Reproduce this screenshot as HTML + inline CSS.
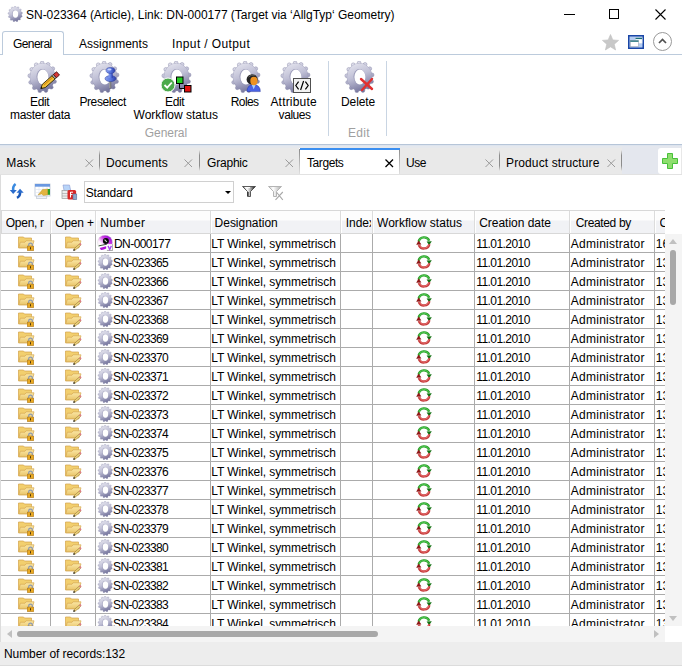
<!DOCTYPE html><html><head><meta charset="utf-8"><style>
*{margin:0;padding:0;box-sizing:border-box}
html,body{width:682px;height:666px;overflow:hidden;background:#fff}
body{position:relative;font-family:"Liberation Sans",sans-serif;font-size:12px;color:#000}
.a{position:absolute}
.t{position:absolute;white-space:nowrap;line-height:14px}
svg{position:absolute;overflow:visible}
.vl{position:absolute;width:1px}
.hl{position:absolute;height:1px}
</style></head><body>
<svg width="0" height="0" style="position:absolute"><defs>
<symbol id="flock" viewBox="0 0 17 15">
<path d="M0.5,1 H5.5 L6.5,2 H13.5 V11.8 H0.5Z" fill="#f2cf6e" stroke="#d2a24a" stroke-width="0.7"/>
<path d="M0.8,11.8 L2.3,6.2 H7 L8,4.8 H16 L14,11.8Z" fill="url(#fold)" stroke="#d6a850" stroke-width="0.7"/>
<path d="M10.7,10.2 V8.8 Q10.7,7.2 12.5,7.2 Q14.3,7.2 14.3,8.8 V10.2" fill="none" stroke="#8a9ab4" stroke-width="1.2"/>
<rect x="9.3" y="10.1" width="6.4" height="4.5" fill="#eaaa22" stroke="#b07818" stroke-width="0.6"/>
<rect x="12.1" y="11.2" width="0.9" height="2.2" fill="#3a2a10"/>
</symbol>
<symbol id="fpen" viewBox="0 0 17 15">
<path d="M0.5,1 H5.5 L6.5,2 H13.5 V11.8 H0.5Z" fill="#f2cf6e" stroke="#d2a24a" stroke-width="0.7"/>
<path d="M0.8,11.8 L2.3,6.2 H7 L8,4.8 H16 L14,11.8Z" fill="url(#fold)" stroke="#d6a850" stroke-width="0.7"/>
<path d="M9.5,13.6 L15,8.6" stroke="#a88a40" stroke-width="2.2" stroke-linecap="round"/>
<path d="M9.8,13.3 L14.8,8.8" stroke="#f8e088" stroke-width="1.1"/>
<path d="M14.6,9 L15.9,7.6" stroke="#e07a8a" stroke-width="1.8"/>
<path d="M8.5,14.6 L9.6,13.5" stroke="#333" stroke-width="1.3"/>
</symbol>
<symbol id="dn" viewBox="0 0 16 16">
<linearGradient id="dng" x1="0.85" y1="0.05" x2="0.15" y2="0.8"><stop offset="0" stop-color="#8a00d0"/><stop offset="0.4" stop-color="#d040e8"/><stop offset="0.75" stop-color="#fff0ff"/><stop offset="1" stop-color="#ffffff"/></linearGradient>
<circle cx="8" cy="7.6" r="7.4" fill="url(#dng)" stroke="#c8c8c8" stroke-width="0.4"/>
<path d="M1.2,11.5 L10,9.4 L10,15.4 L4,15.4 Q2,13.8 1.2,11.5Z" fill="#fff"/>
<path d="M2.6,13 L9.2,11.2 L9.2,13.6 Q6,15.4 4,15 Z" fill="#b010d8"/>
<circle cx="8.9" cy="6" r="3" fill="#080808"/>
<path d="M7.6,4.6 L9.8,6.9" stroke="#c8e0c8" stroke-width="1.1"/>
<path d="M1.6,10.9 L9.9,9.2" stroke="#3a5a3a" stroke-width="1"/>
<rect x="9.9" y="9.2" width="5.8" height="6.2" fill="#fff"/>
<path d="M15.7,9.2 V15.4 H9.9" stroke="#8a8a8a" stroke-width="0.8" fill="none"/>
<path d="M11,10.9 L12.7,14.4 L14.4,10.9" stroke="#a848f0" stroke-width="1.4" fill="none"/>
</symbol>
<symbol id="wf" viewBox="0 0 16 16">
<path d="M2.6,6.6 A5.6,5.6 0 0 1 13.2,5.8" fill="none" stroke="#2a9e2a" stroke-width="2.4"/>
<path d="M2.9,6.2 A5.2,5.2 0 0 1 12.8,5.6" fill="none" stroke="#58d058" stroke-width="0.9"/>
<path d="M10.6,6.4 L15.8,6.2 L13.2,10.2Z" fill="#127012"/>
<path d="M13.4,9.2 A5.6,5.6 0 0 1 2.8,10" fill="none" stroke="#c43a3a" stroke-width="2.4"/>
<path d="M13,9.6 A5.2,5.2 0 0 1 3.3,10.3" fill="none" stroke="#f07a7a" stroke-width="0.8"/>
<path d="M0.2,9.8 L5.4,9.6 L2.6,5.6Z" fill="#8e1616"/>
</symbol>
</defs></svg>

<svg width="0" height="0" style="position:absolute">
<defs>
<linearGradient id="gg" gradientUnits="userSpaceOnUse" x1="9" y1="2" x2="21" y2="31">
<stop offset="0" stop-color="#e4e4ee"/><stop offset="0.45" stop-color="#c0c0d6"/><stop offset="1" stop-color="#6c6c96"/>
</linearGradient>
<radialGradient id="gh" cx="0.45" cy="0.4" r="0.6">
<stop offset="0" stop-color="#ffffff"/><stop offset="1" stop-color="#f0f0f6"/>
</radialGradient>
<symbol id="gear" viewBox="0 0 32 32">
<g fill="url(#gg)" stroke="#8a8aaa" stroke-width="0.5"><circle cx="29.10" cy="13.91" r="1.9"/><circle cx="28.54" cy="20.58" r="1.9"/><circle cx="25.22" cy="26.20" r="1.9"/><circle cx="19.91" cy="29.49" r="1.9"/><circle cx="13.81" cy="29.69" r="1.9"/><circle cx="8.33" cy="26.75" r="1.9"/><circle cx="4.72" cy="21.34" r="1.9"/><circle cx="3.81" cy="14.72" r="1.9"/><circle cx="5.81" cy="8.39" r="1.9"/><circle cx="10.25" cy="3.80" r="1.9"/><circle cx="16.13" cy="2.01" r="1.9"/><circle cx="22.09" cy="3.42" r="1.9"/><circle cx="26.77" cy="7.71" r="1.9"/><ellipse cx="16.5" cy="16" rx="12.5" ry="13.7"/></g>
<ellipse cx="16.6" cy="16" rx="12.3" ry="13.5" fill="url(#gg)"/>
<ellipse cx="16.4" cy="15.6" rx="5.9" ry="7.7" fill="#9a9ab8"/>
<ellipse cx="16.9" cy="16.0" rx="5.5" ry="7.4" fill="#fff"/>
</symbol>
<linearGradient id="fold" x1="0" y1="0" x2="0" y2="1">
<stop offset="0" stop-color="#fbe7a6"/><stop offset="1" stop-color="#e9c56a"/>
</linearGradient>
</defs>
</svg>

<svg style="left:7px;top:5.5px" width="16" height="16"><use href="#gear" width="16" height="16"/></svg>
<div class="t" id="t_title" style="left:26.00px;top:7.84px;letter-spacing:-0.015px;">SN-023364 (Article), Link: DN-000177 (Target via ‘AllgTyp‘ Geometry)</div>
<div class="hl" style="left:564px;top:14px;width:11px;background:#000"></div>
<div class="a" style="left:609px;top:9px;width:10px;height:10px;border:1px solid #000"></div>
<svg style="left:655px;top:9px" width="11" height="11"><path d="M0.5,0.5 L10.5,10.5 M10.5,0.5 L0.5,10.5" stroke="#000" stroke-width="1.1"/></svg>
<div class="hl" style="left:0;top:54px;width:682px;background:#bccbdc"></div>
<div class="a" style="left:2px;top:31px;width:62px;height:24px;border:1px solid #bccbdc;border-bottom:none;border-radius:3px 3px 0 0;background:#fff"></div>
<div class="t" id="t_gen" style="left:13.00px;top:36.54px;letter-spacing:-0.583px;">General</div>
<div class="t" id="t_asg" style="left:79.00px;top:36.54px;letter-spacing:0.020px;">Assignments</div>
<div class="t" id="t_io" style="left:172.00px;top:36.54px;letter-spacing:0.385px;">Input / Output</div>
<svg style="left:601.5px;top:33.5px" width="17" height="17" viewBox="0 0 16 16"><path d="M8,0.5 L10.2,5.6 L15.6,6.0 L11.5,9.6 L12.8,15 L8,12.1 L3.2,15 L4.5,9.6 L0.4,6.0 L5.8,5.6Z" fill="#c8c8c8" stroke="#c0c0c0" stroke-width="0.6" stroke-linejoin="round"/></svg>
<svg style="left:628px;top:35px" width="16" height="14" viewBox="0 0 16 14"><rect x="0.75" y="0.75" width="14.5" height="12.5" fill="#b4ccf2" stroke="#1a46a6" stroke-width="1.5"/><rect x="7.5" y="2.8" width="6.6" height="5.6" fill="#fff" stroke="#c8d4e4" stroke-width="0.5"/><rect x="7.5" y="2.8" width="6.6" height="1.3" fill="#1a6e78"/><rect x="2.3" y="5.5" width="8.2" height="6.2" fill="#fff" stroke="#9aa4b4" stroke-width="0.6"/><rect x="2.3" y="5.5" width="8.2" height="1.3" fill="#1a6e78"/></svg>
<svg style="left:653px;top:32px" width="19" height="19" viewBox="0 0 19 19"><circle cx="9.5" cy="9.5" r="9" fill="#fff" stroke="#9a9a9a" stroke-width="1"/><path d="M6,11 L9.5,7.5 L13,11" fill="none" stroke="#505050" stroke-width="1.7"/></svg>
<svg style="left:26px;top:61px" width="32" height="32"><use href="#gear" width="32" height="32"/></svg>
<svg style="left:26px;top:61px" width="34" height="32" viewBox="0 0 34 32"><g transform="translate(14.8,27.6) rotate(-41.4)"><path d="M0,0 L4,-2.2 L17,-2.2 L17,2.2 L4,2.2Z" fill="#f2c23a" stroke="#2a2000" stroke-width="0.8" stroke-linejoin="round"/><path d="M4.5,-0.6 H16.5" stroke="#d89010" stroke-width="1.2"/><path d="M0,0 L1.6,-0.9 L1.6,0.9Z" fill="#000"/><rect x="17" y="-2.2" width="1.8" height="4.4" fill="#b8b8b8" stroke="#2a2000" stroke-width="0.6"/><rect x="18.8" y="-2.2" width="4.2" height="4.4" fill="#d83838" stroke="#2a0000" stroke-width="0.7"/></g></svg>
<div class="t" id="t_e1" style="left:30.00px;top:94.54px;letter-spacing:-0.333px;">Edit</div>
<div class="t" id="t_md" style="left:10.00px;top:107.84px;letter-spacing:-0.300px;">master data</div>
<svg style="left:88px;top:61px" width="32" height="32"><use href="#gear" width="32" height="32"/></svg>
<svg style="left:88px;top:61px" width="32" height="32" viewBox="0 0 32 32"><defs><linearGradient id="pinb" x1="0" x2="1" y1="0" y2="0"><stop offset="0" stop-color="#8aa0f0"/><stop offset="0.5" stop-color="#5a78e0"/><stop offset="1" stop-color="#2a3ca8"/></linearGradient></defs><path d="M22.3,20 L22.3,27.5" stroke="#707070" stroke-width="2"/><path d="M21.8,20 L21.8,27" stroke="#c8c8c8" stroke-width="0.6"/><ellipse cx="22.5" cy="17.6" rx="5.5" ry="3" fill="url(#pinb)" stroke="#2a3890" stroke-width="0.5"/><rect x="20.6" y="11" width="4.1" height="6" fill="url(#pinb)"/><ellipse cx="22.5" cy="9.4" rx="4.5" ry="2.9" fill="url(#pinb)" stroke="#2a3890" stroke-width="0.5"/><ellipse cx="21.5" cy="8.6" rx="2" ry="1" fill="#c8d4ff"/></svg>
<div class="t" id="t_pre" style="left:79.40px;top:94.54px;letter-spacing:-0.388px;">Preselect</div>
<svg style="left:160px;top:61px" width="32" height="32"><use href="#gear" width="32" height="32"/></svg>
<svg style="left:160px;top:61px" width="34" height="34" viewBox="0 0 34 34"><circle cx="8" cy="24" r="7" fill="#4caa4c" stroke="#fff" stroke-width="1"/><path d="M4.5,24 L7.2,26.7 L11.8,21.5" fill="none" stroke="#fff" stroke-width="1.8"/><rect x="16.5" y="16" width="6.5" height="6.5" fill="#22cc22" stroke="#000" stroke-width="1"/><rect x="24.5" y="24.5" width="6.5" height="6.5" fill="#e01010" stroke="#000" stroke-width="1"/><path d="M19.5,22.5 L19.5,27.5 L24,27.5" fill="none" stroke="#000" stroke-width="1"/></svg>
<div class="t" id="t_e2" style="left:165.00px;top:94.54px;letter-spacing:-0.333px;">Edit</div>
<div class="t" id="t_wfs" style="left:133.60px;top:107.84px;letter-spacing:-0.007px;">Workflow status</div>
<div class="t" id="t_g2" style="left:144.70px;top:125.64px;color:#a0a0a0;letter-spacing:-0.033px;">General</div>
<svg style="left:229px;top:61px" width="32" height="32"><use href="#gear" width="32" height="32"/></svg>
<svg style="left:229px;top:61px" width="32" height="32" viewBox="0 0 32 32"><path d="M18,30.6 Q18,23.8 24.6,23.6 Q31.3,23.8 31.3,30.6Z" fill="#4a62e4" stroke="#2a3aa0" stroke-width="0.5"/><path d="M22.8,23.9 L24.7,28.2 L26.6,23.9Z" fill="#a8d0ff"/><ellipse cx="23.1" cy="18.4" rx="5.5" ry="5.2" fill="#222"/><ellipse cx="24.9" cy="20" rx="3.6" ry="4.2" fill="#ee9222"/><path d="M19.5,16 Q22,13.5 26,14" stroke="#777" stroke-width="0.8" fill="none"/></svg>
<div class="t" id="t_rol" style="left:230.80px;top:94.54px;letter-spacing:-0.600px;">Roles</div>
<svg style="left:279px;top:61px" width="32" height="32"><use href="#gear" width="32" height="32"/></svg>
<svg style="left:279px;top:61px" width="34" height="34" viewBox="0 0 34 34"><rect x="14.5" y="17.5" width="17" height="14" fill="#f2f2f2" stroke="#505050" stroke-width="1"/><path d="M19.6,20.6 L16.8,24.5 L19.6,28.4 M24.6,20 L21.6,29 M26.4,20.6 L29.2,24.5 L26.4,28.4" stroke="#000" stroke-width="1.2" fill="none"/></svg>
<div class="t" id="t_att" style="left:270.40px;top:94.54px;letter-spacing:0.200px;">Attribute</div>
<div class="t" id="t_val" style="left:278.60px;top:107.84px;letter-spacing:-0.440px;">values</div>
<div class="vl" style="left:328px;top:61px;height:75px;background:#c9d5e3"></div>
<svg style="left:343px;top:61px" width="32" height="32"><use href="#gear" width="32" height="32"/></svg>
<svg style="left:343px;top:61px" width="32" height="32" viewBox="0 0 32 32"><path d="M18,18 L29,28 M29,18 L19,29" stroke="#e03030" stroke-width="2.4" stroke-linecap="round"/></svg>
<div class="t" id="t_del" style="left:341.00px;top:94.54px;letter-spacing:-0.100px;">Delete</div>
<div class="t" id="t_e3" style="left:348.00px;top:125.64px;color:#a0a0a0;letter-spacing:0.267px;">Edit</div>
<div class="vl" style="left:386px;top:61px;height:75px;background:#c9d5e3"></div>
<div class="hl" style="left:0;top:144px;width:682px;background:#b6c5d8"></div>
<div class="hl" style="left:0;top:145px;width:682px;background:#dde4ee"></div>
<div class="a" style="left:0;top:146px;width:682px;height:29px;background:#e9e9e9;border-bottom:1px solid #e2e2e2"></div>
<div class="hl" style="left:0;top:146px;width:682px;height:2px;background:#e5e8ed"></div>
<div class="a" style="left:622px;top:146px;width:60px;height:28px;background:#e4e7ee"></div>
<div class="a" style="left:299px;top:148px;width:101px;height:26px;background:#fff"></div>
<div class="vl" style="left:299px;top:149px;height:25px;background:linear-gradient(#8a8a8a,#e0e0e0)"></div>
<div class="vl" style="left:399px;top:149px;height:25px;background:linear-gradient(#8a8a8a,#e0e0e0)"></div>
<div class="a" style="left:300px;top:148px;width:100px;height:2px;background:#3a8ef0"></div>
<div class="t" id="tab_Mask" style="left:6.20px;top:155.84px;letter-spacing:0.233px;">Mask</div>
<svg style="left:85px;top:159px" width="9" height="9"><path d="M0.5,0.5 L8,8 M8,0.5 L0.5,8" stroke="#9a9a9a" stroke-width="1"/></svg>
<div class="vl" style="left:99px;top:150px;height:21px;background:linear-gradient(rgba(140,140,140,0),#8c8c8c 25%,#8c8c8c 75%,rgba(140,140,140,0))"></div>
<div class="t" id="tab_Documents" style="left:106.00px;top:155.84px;letter-spacing:0.125px;">Documents</div>
<svg style="left:184px;top:159px" width="9" height="9"><path d="M0.5,0.5 L8,8 M8,0.5 L0.5,8" stroke="#9a9a9a" stroke-width="1"/></svg>
<div class="vl" style="left:199px;top:150px;height:21px;background:linear-gradient(rgba(140,140,140,0),#8c8c8c 25%,#8c8c8c 75%,rgba(140,140,140,0))"></div>
<div class="t" id="tab_Graphic" style="left:207.00px;top:155.84px;letter-spacing:-0.200px;">Graphic</div>
<svg style="left:285px;top:159px" width="9" height="9"><path d="M0.5,0.5 L8,8 M8,0.5 L0.5,8" stroke="#9a9a9a" stroke-width="1"/></svg>
<div class="t" id="tab_Targets" style="left:307.00px;top:155.84px;letter-spacing:-0.417px;">Targets</div>
<svg style="left:385px;top:159px" width="9" height="9"><path d="M0.5,0.5 L8,8 M8,0.5 L0.5,8" stroke="#000" stroke-width="1.3"/></svg>
<div class="t" id="tab_Use" style="left:406.00px;top:155.84px;letter-spacing:-0.500px;">Use</div>
<svg style="left:485px;top:159px" width="9" height="9"><path d="M0.5,0.5 L8,8 M8,0.5 L0.5,8" stroke="#9a9a9a" stroke-width="1"/></svg>
<div class="vl" style="left:499px;top:150px;height:21px;background:linear-gradient(rgba(140,140,140,0),#8c8c8c 25%,#8c8c8c 75%,rgba(140,140,140,0))"></div>
<div class="t" id="tab_Product" style="left:506.00px;top:155.84px;letter-spacing:0.125px;">Product structure</div>
<svg style="left:607px;top:159px" width="9" height="9"><path d="M0.5,0.5 L8,8 M8,0.5 L0.5,8" stroke="#9a9a9a" stroke-width="1"/></svg>
<div class="vl" style="left:621px;top:150px;height:21px;background:linear-gradient(rgba(140,140,140,0),#8c8c8c 25%,#8c8c8c 75%,rgba(140,140,140,0))"></div>
<div class="a" style="left:658px;top:148px;width:24px;height:26px;background:#fff;border-radius:3px 0 0 3px;border-right:1px solid #e8e8e8"></div>
<svg style="left:662px;top:153px" width="16" height="16" viewBox="0 0 16 16"><path d="M5.5,0.5 H10.5 V5.5 H15.5 V10.5 H10.5 V15.5 H5.5 V10.5 H0.5 V5.5 H5.5Z" fill="#8ede6e" stroke="#48c03a" stroke-width="1"/></svg>
<svg style="left:6px;top:180px" width="24" height="24" viewBox="0 0 24 24"><path d="M9.6,4 Q6.6,6 7.2,10.5" stroke="#3a8ae0" stroke-width="2.6" fill="none"/><path d="M3.8,10 L10.8,10 L7.2,14Z" fill="#2a6ccc"/><path d="M11,17.8 Q14.5,16 14,12" stroke="#1a58b8" stroke-width="2.6" fill="none"/><path d="M10.5,12.8 L17.7,12.8 L14,8.8Z" fill="#2a6ccc"/></svg>
<svg style="left:30px;top:180px" width="24" height="24" viewBox="0 0 24 24"><rect x="6.3" y="15.5" width="10.5" height="3" fill="#eef2f8" stroke="#b8c0cc" stroke-width="0.6"/><rect x="5" y="4" width="15" height="12" fill="#fff" stroke="#b8c4d4" stroke-width="0.8"/><path d="M5,9.5 H20 M5,12.5 H20 M9,6.5 V16 M13,6.5 V16 M17,6.5 V16" stroke="#dde4ee" stroke-width="0.6"/><rect x="5" y="4" width="15" height="2.7" fill="#6a98e0"/><path d="M8,15 L12.5,9.5 L18,9 L18,14.8 L13.5,15.5 L11.5,14Z" fill="#e2b440" stroke="#b88a20" stroke-width="0.4"/><rect x="17.8" y="9" width="2.2" height="5.8" fill="#28a028"/></svg>
<svg style="left:57px;top:180px" width="24" height="24" viewBox="0 0 24 24"><path d="M6,5 L12.5,5 L13.7,10.5 L7,10.5Z" fill="#b8d4f8" stroke="#8a98d0" stroke-width="0.6"/><rect x="5" y="10.5" width="8" height="8" fill="#ececec" stroke="#9a9a9a" stroke-width="0.7"/><path d="M5,13.5 H11 M5,16 H11" stroke="#a0a0a0" stroke-width="0.6"/><rect x="10.5" y="10" width="8.6" height="9.6" rx="1.5" fill="#d82828"/><path d="M13.5,12 V17.5 M13.5,12.2 H16 M13.5,14.6 H15.5" stroke="#fff" stroke-width="1"/><rect x="16" y="14" width="3.8" height="5.6" fill="#90a8c8" stroke="#4a6a9a" stroke-width="0.5"/></svg>
<div class="a" style="left:84px;top:181px;width:150px;height:22px;border:1px solid #d0d0d0;background:#fff"></div>
<div class="t" id="t_std" style="left:85.80px;top:185.74px;letter-spacing:-0.243px;">Standard</div>
<svg style="left:225px;top:191px" width="6" height="3" viewBox="0 0 6 3"><path d="M0,0 H6 L3,3Z" fill="#000"/></svg>
<svg style="left:242px;top:186px" width="14" height="11" viewBox="0 0 14 11"><defs><linearGradient id="flt" x1="0" x2="1" y1="0" y2="0"><stop offset="0" stop-color="#808080"/><stop offset="0.35" stop-color="#ffffff"/><stop offset="0.65" stop-color="#a0a0a0"/><stop offset="1" stop-color="#000"/></linearGradient></defs><path d="M0.5,0.5 H13.5 L8.5,5.5 V10.5 H5.5 V5.5Z" fill="url(#flt)" stroke="#3a3a3a" stroke-width="0.8" stroke-linejoin="round"/><path d="M6,6 V10" stroke="#202020" stroke-width="1.2"/><path d="M3,1.6 H8" stroke="#fff" stroke-width="1"/></svg>
<svg style="left:268px;top:186px" width="16" height="15" viewBox="0 0 16 15"><defs><linearGradient id="flt2" x1="0" x2="1" y1="0" y2="0"><stop offset="0" stop-color="#c8c8c8"/><stop offset="0.35" stop-color="#ffffff"/><stop offset="1" stop-color="#a8a8a8"/></linearGradient></defs><path d="M0.5,0.5 H13.5 L8.5,5.5 V10.5 H5.5 V5.5Z" fill="url(#flt2)" stroke="#b4b4b4" stroke-width="1" stroke-linejoin="round"/><path d="M7.5,13.8 L14.8,6 M8.8,6.5 L14.8,13.8" stroke="#a8a8a8" stroke-width="1.1"/></svg>
<div class="vl" style="left:1px;top:210px;height:24px;background:#d8d8d8"></div>
<div class="a" style="left:1px;top:210px;width:664px;height:24px;border-top:1px solid #d8d8d8;border-bottom:1px solid #d8d8d8;background:linear-gradient(#fdfdfd 0,#fdfdfd 9px,#f1f2f5 10px,#f1f2f5 100%)"></div>
<div class="vl" style="left:1px;top:210px;height:24px;background:#d8d8d8"></div>
<div class="vl" style="left:50px;top:211px;height:22px;background:#dcdcdc"></div>
<div class="vl" style="left:51px;top:211px;height:22px;background:#fff"></div>
<div class="vl" style="left:95px;top:211px;height:22px;background:#dcdcdc"></div>
<div class="vl" style="left:96px;top:211px;height:22px;background:#fff"></div>
<div class="vl" style="left:210px;top:211px;height:22px;background:#dcdcdc"></div>
<div class="vl" style="left:211px;top:211px;height:22px;background:#fff"></div>
<div class="vl" style="left:340px;top:211px;height:22px;background:#dcdcdc"></div>
<div class="vl" style="left:341px;top:211px;height:22px;background:#fff"></div>
<div class="vl" style="left:372px;top:211px;height:22px;background:#dcdcdc"></div>
<div class="vl" style="left:373px;top:211px;height:22px;background:#fff"></div>
<div class="vl" style="left:474px;top:211px;height:22px;background:#dcdcdc"></div>
<div class="vl" style="left:475px;top:211px;height:22px;background:#fff"></div>
<div class="vl" style="left:569px;top:211px;height:22px;background:#dcdcdc"></div>
<div class="vl" style="left:570px;top:211px;height:22px;background:#fff"></div>
<div class="vl" style="left:654px;top:211px;height:22px;background:#dcdcdc"></div>
<div class="vl" style="left:655px;top:211px;height:22px;background:#fff"></div>
<div class="a" style="left:0;top:205px;width:665px;height:30px;overflow:hidden">
<div class="t" id="h0" style="left:5.80px;top:10.64px;letter-spacing:-0.283px;width:46px;overflow:hidden">Open, r</div>
<div class="t" id="h1" style="left:55.20px;top:10.64px;letter-spacing:-0.200px;width:41px;overflow:hidden">Open +</div>
<div class="t" id="h2" style="left:100.20px;top:10.64px;letter-spacing:0.420px;width:111px;overflow:hidden">Number</div>
<div class="t" id="h3" style="left:214.60px;top:10.64px;letter-spacing:-0.020px;width:126px;overflow:hidden">Designation</div>
<div class="t" id="h4" style="left:345.70px;top:10.64px;width:25px;overflow:hidden">Index</div>
<div class="t" id="h5" style="left:377.00px;top:10.64px;letter-spacing:0.036px;width:98px;overflow:hidden">Workflow status</div>
<div class="t" id="h6" style="left:479.20px;top:10.64px;letter-spacing:-0.025px;width:91px;overflow:hidden">Creation date</div>
<div class="t" id="h7" style="left:575.80px;top:10.64px;letter-spacing:-0.367px;width:81px;overflow:hidden">Created by</div>
<div class="t" id="h8" style="left:659.60px;top:10.64px;width:8px;overflow:hidden">C</div>
</div>
<div class="a" style="left:0;top:234px;width:665px;height:392px;overflow:hidden;background:#fff">
<div class="hl" style="left:1px;top:18px;width:664px;background:#ababab"></div>
<svg style="left:18px;top:2px" width="17" height="15" viewBox="0 0 17 15"><use href="#flock"/></svg>
<svg style="left:65px;top:2px" width="17" height="15" viewBox="0 0 17 15"><use href="#fpen"/></svg>
<svg style="left:97px;top:1px" width="16" height="16" viewBox="0 0 16 16"><use href="#dn"/></svg>
<div class="t" id="n_dn" style="left:114.00px;top:2.64px;letter-spacing:-0.562px;">DN-000177</div>
<div class="t" id="c_lt" style="left:211.20px;top:2.64px;letter-spacing:-0.076px;">LT Winkel, symmetrisch</div>
<svg style="left:416px;top:1px" width="16" height="16" viewBox="0 0 16 16"><use href="#wf"/></svg>
<div class="t" id="c_dt" style="left:476.20px;top:2.64px;letter-spacing:-0.556px;">11.01.2010</div>
<div class="t" id="c_adm" style="left:570.80px;top:2.64px;letter-spacing:0.250px;">Administrator</div>
<div class="t" style="left:655.80px;top:2.64px;">16</div>
<div class="hl" style="left:1px;top:37px;width:664px;background:#ababab"></div>
<svg style="left:18px;top:21px" width="17" height="15" viewBox="0 0 17 15"><use href="#flock"/></svg>
<svg style="left:65px;top:21px" width="17" height="15" viewBox="0 0 17 15"><use href="#fpen"/></svg>
<svg style="left:97px;top:20px" width="16" height="16"><use href="#gear" width="16" height="16"/></svg>
<div class="t" id="n_sn" style="left:113.00px;top:21.64px;letter-spacing:-0.625px;">SN-023365</div>
<div class="t" style="left:211.20px;top:21.64px;letter-spacing:-0.076px;">LT Winkel, symmetrisch</div>
<svg style="left:416px;top:20px" width="16" height="16" viewBox="0 0 16 16"><use href="#wf"/></svg>
<div class="t" style="left:476.20px;top:21.64px;letter-spacing:-0.556px;">11.01.2010</div>
<div class="t" style="left:570.80px;top:21.64px;letter-spacing:0.250px;">Administrator</div>
<div class="t" style="left:655.80px;top:21.64px;">13</div>
<div class="hl" style="left:1px;top:56px;width:664px;background:#ababab"></div>
<svg style="left:18px;top:40px" width="17" height="15" viewBox="0 0 17 15"><use href="#flock"/></svg>
<svg style="left:65px;top:40px" width="17" height="15" viewBox="0 0 17 15"><use href="#fpen"/></svg>
<svg style="left:97px;top:39px" width="16" height="16"><use href="#gear" width="16" height="16"/></svg>
<div class="t" style="left:113.00px;top:40.64px;letter-spacing:-0.625px;">SN-023366</div>
<div class="t" style="left:211.20px;top:40.64px;letter-spacing:-0.076px;">LT Winkel, symmetrisch</div>
<svg style="left:416px;top:39px" width="16" height="16" viewBox="0 0 16 16"><use href="#wf"/></svg>
<div class="t" style="left:476.20px;top:40.64px;letter-spacing:-0.556px;">11.01.2010</div>
<div class="t" style="left:570.80px;top:40.64px;letter-spacing:0.250px;">Administrator</div>
<div class="t" style="left:655.80px;top:40.64px;">13</div>
<div class="hl" style="left:1px;top:75px;width:664px;background:#ababab"></div>
<svg style="left:18px;top:59px" width="17" height="15" viewBox="0 0 17 15"><use href="#flock"/></svg>
<svg style="left:65px;top:59px" width="17" height="15" viewBox="0 0 17 15"><use href="#fpen"/></svg>
<svg style="left:97px;top:58px" width="16" height="16"><use href="#gear" width="16" height="16"/></svg>
<div class="t" style="left:113.00px;top:59.64px;letter-spacing:-0.625px;">SN-023367</div>
<div class="t" style="left:211.20px;top:59.64px;letter-spacing:-0.076px;">LT Winkel, symmetrisch</div>
<svg style="left:416px;top:58px" width="16" height="16" viewBox="0 0 16 16"><use href="#wf"/></svg>
<div class="t" style="left:476.20px;top:59.64px;letter-spacing:-0.556px;">11.01.2010</div>
<div class="t" style="left:570.80px;top:59.64px;letter-spacing:0.250px;">Administrator</div>
<div class="t" style="left:655.80px;top:59.64px;">13</div>
<div class="hl" style="left:1px;top:94px;width:664px;background:#ababab"></div>
<svg style="left:18px;top:78px" width="17" height="15" viewBox="0 0 17 15"><use href="#flock"/></svg>
<svg style="left:65px;top:78px" width="17" height="15" viewBox="0 0 17 15"><use href="#fpen"/></svg>
<svg style="left:97px;top:77px" width="16" height="16"><use href="#gear" width="16" height="16"/></svg>
<div class="t" style="left:113.00px;top:78.64px;letter-spacing:-0.625px;">SN-023368</div>
<div class="t" style="left:211.20px;top:78.64px;letter-spacing:-0.076px;">LT Winkel, symmetrisch</div>
<svg style="left:416px;top:77px" width="16" height="16" viewBox="0 0 16 16"><use href="#wf"/></svg>
<div class="t" style="left:476.20px;top:78.64px;letter-spacing:-0.556px;">11.01.2010</div>
<div class="t" style="left:570.80px;top:78.64px;letter-spacing:0.250px;">Administrator</div>
<div class="t" style="left:655.80px;top:78.64px;">13</div>
<div class="hl" style="left:1px;top:113px;width:664px;background:#ababab"></div>
<svg style="left:18px;top:97px" width="17" height="15" viewBox="0 0 17 15"><use href="#flock"/></svg>
<svg style="left:65px;top:97px" width="17" height="15" viewBox="0 0 17 15"><use href="#fpen"/></svg>
<svg style="left:97px;top:96px" width="16" height="16"><use href="#gear" width="16" height="16"/></svg>
<div class="t" style="left:113.00px;top:97.64px;letter-spacing:-0.625px;">SN-023369</div>
<div class="t" style="left:211.20px;top:97.64px;letter-spacing:-0.076px;">LT Winkel, symmetrisch</div>
<svg style="left:416px;top:96px" width="16" height="16" viewBox="0 0 16 16"><use href="#wf"/></svg>
<div class="t" style="left:476.20px;top:97.64px;letter-spacing:-0.556px;">11.01.2010</div>
<div class="t" style="left:570.80px;top:97.64px;letter-spacing:0.250px;">Administrator</div>
<div class="t" style="left:655.80px;top:97.64px;">13</div>
<div class="hl" style="left:1px;top:132px;width:664px;background:#ababab"></div>
<svg style="left:18px;top:116px" width="17" height="15" viewBox="0 0 17 15"><use href="#flock"/></svg>
<svg style="left:65px;top:116px" width="17" height="15" viewBox="0 0 17 15"><use href="#fpen"/></svg>
<svg style="left:97px;top:115px" width="16" height="16"><use href="#gear" width="16" height="16"/></svg>
<div class="t" style="left:113.00px;top:116.64px;letter-spacing:-0.625px;">SN-023370</div>
<div class="t" style="left:211.20px;top:116.64px;letter-spacing:-0.076px;">LT Winkel, symmetrisch</div>
<svg style="left:416px;top:115px" width="16" height="16" viewBox="0 0 16 16"><use href="#wf"/></svg>
<div class="t" style="left:476.20px;top:116.64px;letter-spacing:-0.556px;">11.01.2010</div>
<div class="t" style="left:570.80px;top:116.64px;letter-spacing:0.250px;">Administrator</div>
<div class="t" style="left:655.80px;top:116.64px;">13</div>
<div class="hl" style="left:1px;top:151px;width:664px;background:#ababab"></div>
<svg style="left:18px;top:135px" width="17" height="15" viewBox="0 0 17 15"><use href="#flock"/></svg>
<svg style="left:65px;top:135px" width="17" height="15" viewBox="0 0 17 15"><use href="#fpen"/></svg>
<svg style="left:97px;top:134px" width="16" height="16"><use href="#gear" width="16" height="16"/></svg>
<div class="t" style="left:113.00px;top:135.64px;letter-spacing:-0.625px;">SN-023371</div>
<div class="t" style="left:211.20px;top:135.64px;letter-spacing:-0.076px;">LT Winkel, symmetrisch</div>
<svg style="left:416px;top:134px" width="16" height="16" viewBox="0 0 16 16"><use href="#wf"/></svg>
<div class="t" style="left:476.20px;top:135.64px;letter-spacing:-0.556px;">11.01.2010</div>
<div class="t" style="left:570.80px;top:135.64px;letter-spacing:0.250px;">Administrator</div>
<div class="t" style="left:655.80px;top:135.64px;">13</div>
<div class="hl" style="left:1px;top:170px;width:664px;background:#ababab"></div>
<svg style="left:18px;top:154px" width="17" height="15" viewBox="0 0 17 15"><use href="#flock"/></svg>
<svg style="left:65px;top:154px" width="17" height="15" viewBox="0 0 17 15"><use href="#fpen"/></svg>
<svg style="left:97px;top:153px" width="16" height="16"><use href="#gear" width="16" height="16"/></svg>
<div class="t" style="left:113.00px;top:154.64px;letter-spacing:-0.625px;">SN-023372</div>
<div class="t" style="left:211.20px;top:154.64px;letter-spacing:-0.076px;">LT Winkel, symmetrisch</div>
<svg style="left:416px;top:153px" width="16" height="16" viewBox="0 0 16 16"><use href="#wf"/></svg>
<div class="t" style="left:476.20px;top:154.64px;letter-spacing:-0.556px;">11.01.2010</div>
<div class="t" style="left:570.80px;top:154.64px;letter-spacing:0.250px;">Administrator</div>
<div class="t" style="left:655.80px;top:154.64px;">13</div>
<div class="hl" style="left:1px;top:189px;width:664px;background:#ababab"></div>
<svg style="left:18px;top:173px" width="17" height="15" viewBox="0 0 17 15"><use href="#flock"/></svg>
<svg style="left:65px;top:173px" width="17" height="15" viewBox="0 0 17 15"><use href="#fpen"/></svg>
<svg style="left:97px;top:172px" width="16" height="16"><use href="#gear" width="16" height="16"/></svg>
<div class="t" style="left:113.00px;top:173.64px;letter-spacing:-0.625px;">SN-023373</div>
<div class="t" style="left:211.20px;top:173.64px;letter-spacing:-0.076px;">LT Winkel, symmetrisch</div>
<svg style="left:416px;top:172px" width="16" height="16" viewBox="0 0 16 16"><use href="#wf"/></svg>
<div class="t" style="left:476.20px;top:173.64px;letter-spacing:-0.556px;">11.01.2010</div>
<div class="t" style="left:570.80px;top:173.64px;letter-spacing:0.250px;">Administrator</div>
<div class="t" style="left:655.80px;top:173.64px;">13</div>
<div class="hl" style="left:1px;top:208px;width:664px;background:#ababab"></div>
<svg style="left:18px;top:192px" width="17" height="15" viewBox="0 0 17 15"><use href="#flock"/></svg>
<svg style="left:65px;top:192px" width="17" height="15" viewBox="0 0 17 15"><use href="#fpen"/></svg>
<svg style="left:97px;top:191px" width="16" height="16"><use href="#gear" width="16" height="16"/></svg>
<div class="t" style="left:113.00px;top:192.64px;letter-spacing:-0.625px;">SN-023374</div>
<div class="t" style="left:211.20px;top:192.64px;letter-spacing:-0.076px;">LT Winkel, symmetrisch</div>
<svg style="left:416px;top:191px" width="16" height="16" viewBox="0 0 16 16"><use href="#wf"/></svg>
<div class="t" style="left:476.20px;top:192.64px;letter-spacing:-0.556px;">11.01.2010</div>
<div class="t" style="left:570.80px;top:192.64px;letter-spacing:0.250px;">Administrator</div>
<div class="t" style="left:655.80px;top:192.64px;">13</div>
<div class="hl" style="left:1px;top:227px;width:664px;background:#ababab"></div>
<svg style="left:18px;top:211px" width="17" height="15" viewBox="0 0 17 15"><use href="#flock"/></svg>
<svg style="left:65px;top:211px" width="17" height="15" viewBox="0 0 17 15"><use href="#fpen"/></svg>
<svg style="left:97px;top:210px" width="16" height="16"><use href="#gear" width="16" height="16"/></svg>
<div class="t" style="left:113.00px;top:211.64px;letter-spacing:-0.625px;">SN-023375</div>
<div class="t" style="left:211.20px;top:211.64px;letter-spacing:-0.076px;">LT Winkel, symmetrisch</div>
<svg style="left:416px;top:210px" width="16" height="16" viewBox="0 0 16 16"><use href="#wf"/></svg>
<div class="t" style="left:476.20px;top:211.64px;letter-spacing:-0.556px;">11.01.2010</div>
<div class="t" style="left:570.80px;top:211.64px;letter-spacing:0.250px;">Administrator</div>
<div class="t" style="left:655.80px;top:211.64px;">13</div>
<div class="hl" style="left:1px;top:246px;width:664px;background:#ababab"></div>
<svg style="left:18px;top:230px" width="17" height="15" viewBox="0 0 17 15"><use href="#flock"/></svg>
<svg style="left:65px;top:230px" width="17" height="15" viewBox="0 0 17 15"><use href="#fpen"/></svg>
<svg style="left:97px;top:229px" width="16" height="16"><use href="#gear" width="16" height="16"/></svg>
<div class="t" style="left:113.00px;top:230.64px;letter-spacing:-0.625px;">SN-023376</div>
<div class="t" style="left:211.20px;top:230.64px;letter-spacing:-0.076px;">LT Winkel, symmetrisch</div>
<svg style="left:416px;top:229px" width="16" height="16" viewBox="0 0 16 16"><use href="#wf"/></svg>
<div class="t" style="left:476.20px;top:230.64px;letter-spacing:-0.556px;">11.01.2010</div>
<div class="t" style="left:570.80px;top:230.64px;letter-spacing:0.250px;">Administrator</div>
<div class="t" style="left:655.80px;top:230.64px;">13</div>
<div class="hl" style="left:1px;top:265px;width:664px;background:#ababab"></div>
<svg style="left:18px;top:249px" width="17" height="15" viewBox="0 0 17 15"><use href="#flock"/></svg>
<svg style="left:65px;top:249px" width="17" height="15" viewBox="0 0 17 15"><use href="#fpen"/></svg>
<svg style="left:97px;top:248px" width="16" height="16"><use href="#gear" width="16" height="16"/></svg>
<div class="t" style="left:113.00px;top:249.64px;letter-spacing:-0.625px;">SN-023377</div>
<div class="t" style="left:211.20px;top:249.64px;letter-spacing:-0.076px;">LT Winkel, symmetrisch</div>
<svg style="left:416px;top:248px" width="16" height="16" viewBox="0 0 16 16"><use href="#wf"/></svg>
<div class="t" style="left:476.20px;top:249.64px;letter-spacing:-0.556px;">11.01.2010</div>
<div class="t" style="left:570.80px;top:249.64px;letter-spacing:0.250px;">Administrator</div>
<div class="t" style="left:655.80px;top:249.64px;">13</div>
<div class="hl" style="left:1px;top:284px;width:664px;background:#ababab"></div>
<svg style="left:18px;top:268px" width="17" height="15" viewBox="0 0 17 15"><use href="#flock"/></svg>
<svg style="left:65px;top:268px" width="17" height="15" viewBox="0 0 17 15"><use href="#fpen"/></svg>
<svg style="left:97px;top:267px" width="16" height="16"><use href="#gear" width="16" height="16"/></svg>
<div class="t" style="left:113.00px;top:268.64px;letter-spacing:-0.625px;">SN-023378</div>
<div class="t" style="left:211.20px;top:268.64px;letter-spacing:-0.076px;">LT Winkel, symmetrisch</div>
<svg style="left:416px;top:267px" width="16" height="16" viewBox="0 0 16 16"><use href="#wf"/></svg>
<div class="t" style="left:476.20px;top:268.64px;letter-spacing:-0.556px;">11.01.2010</div>
<div class="t" style="left:570.80px;top:268.64px;letter-spacing:0.250px;">Administrator</div>
<div class="t" style="left:655.80px;top:268.64px;">13</div>
<div class="hl" style="left:1px;top:303px;width:664px;background:#ababab"></div>
<svg style="left:18px;top:287px" width="17" height="15" viewBox="0 0 17 15"><use href="#flock"/></svg>
<svg style="left:65px;top:287px" width="17" height="15" viewBox="0 0 17 15"><use href="#fpen"/></svg>
<svg style="left:97px;top:286px" width="16" height="16"><use href="#gear" width="16" height="16"/></svg>
<div class="t" style="left:113.00px;top:287.64px;letter-spacing:-0.625px;">SN-023379</div>
<div class="t" style="left:211.20px;top:287.64px;letter-spacing:-0.076px;">LT Winkel, symmetrisch</div>
<svg style="left:416px;top:286px" width="16" height="16" viewBox="0 0 16 16"><use href="#wf"/></svg>
<div class="t" style="left:476.20px;top:287.64px;letter-spacing:-0.556px;">11.01.2010</div>
<div class="t" style="left:570.80px;top:287.64px;letter-spacing:0.250px;">Administrator</div>
<div class="t" style="left:655.80px;top:287.64px;">13</div>
<div class="hl" style="left:1px;top:322px;width:664px;background:#ababab"></div>
<svg style="left:18px;top:306px" width="17" height="15" viewBox="0 0 17 15"><use href="#flock"/></svg>
<svg style="left:65px;top:306px" width="17" height="15" viewBox="0 0 17 15"><use href="#fpen"/></svg>
<svg style="left:97px;top:305px" width="16" height="16"><use href="#gear" width="16" height="16"/></svg>
<div class="t" style="left:113.00px;top:306.64px;letter-spacing:-0.625px;">SN-023380</div>
<div class="t" style="left:211.20px;top:306.64px;letter-spacing:-0.076px;">LT Winkel, symmetrisch</div>
<svg style="left:416px;top:305px" width="16" height="16" viewBox="0 0 16 16"><use href="#wf"/></svg>
<div class="t" style="left:476.20px;top:306.64px;letter-spacing:-0.556px;">11.01.2010</div>
<div class="t" style="left:570.80px;top:306.64px;letter-spacing:0.250px;">Administrator</div>
<div class="t" style="left:655.80px;top:306.64px;">13</div>
<div class="hl" style="left:1px;top:341px;width:664px;background:#ababab"></div>
<svg style="left:18px;top:325px" width="17" height="15" viewBox="0 0 17 15"><use href="#flock"/></svg>
<svg style="left:65px;top:325px" width="17" height="15" viewBox="0 0 17 15"><use href="#fpen"/></svg>
<svg style="left:97px;top:324px" width="16" height="16"><use href="#gear" width="16" height="16"/></svg>
<div class="t" style="left:113.00px;top:325.64px;letter-spacing:-0.625px;">SN-023381</div>
<div class="t" style="left:211.20px;top:325.64px;letter-spacing:-0.076px;">LT Winkel, symmetrisch</div>
<svg style="left:416px;top:324px" width="16" height="16" viewBox="0 0 16 16"><use href="#wf"/></svg>
<div class="t" style="left:476.20px;top:325.64px;letter-spacing:-0.556px;">11.01.2010</div>
<div class="t" style="left:570.80px;top:325.64px;letter-spacing:0.250px;">Administrator</div>
<div class="t" style="left:655.80px;top:325.64px;">13</div>
<div class="hl" style="left:1px;top:360px;width:664px;background:#ababab"></div>
<svg style="left:18px;top:344px" width="17" height="15" viewBox="0 0 17 15"><use href="#flock"/></svg>
<svg style="left:65px;top:344px" width="17" height="15" viewBox="0 0 17 15"><use href="#fpen"/></svg>
<svg style="left:97px;top:343px" width="16" height="16"><use href="#gear" width="16" height="16"/></svg>
<div class="t" style="left:113.00px;top:344.64px;letter-spacing:-0.625px;">SN-023382</div>
<div class="t" style="left:211.20px;top:344.64px;letter-spacing:-0.076px;">LT Winkel, symmetrisch</div>
<svg style="left:416px;top:343px" width="16" height="16" viewBox="0 0 16 16"><use href="#wf"/></svg>
<div class="t" style="left:476.20px;top:344.64px;letter-spacing:-0.556px;">11.01.2010</div>
<div class="t" style="left:570.80px;top:344.64px;letter-spacing:0.250px;">Administrator</div>
<div class="t" style="left:655.80px;top:344.64px;">13</div>
<div class="hl" style="left:1px;top:379px;width:664px;background:#ababab"></div>
<svg style="left:18px;top:363px" width="17" height="15" viewBox="0 0 17 15"><use href="#flock"/></svg>
<svg style="left:65px;top:363px" width="17" height="15" viewBox="0 0 17 15"><use href="#fpen"/></svg>
<svg style="left:97px;top:362px" width="16" height="16"><use href="#gear" width="16" height="16"/></svg>
<div class="t" style="left:113.00px;top:363.64px;letter-spacing:-0.625px;">SN-023383</div>
<div class="t" style="left:211.20px;top:363.64px;letter-spacing:-0.076px;">LT Winkel, symmetrisch</div>
<svg style="left:416px;top:362px" width="16" height="16" viewBox="0 0 16 16"><use href="#wf"/></svg>
<div class="t" style="left:476.20px;top:363.64px;letter-spacing:-0.556px;">11.01.2010</div>
<div class="t" style="left:570.80px;top:363.64px;letter-spacing:0.250px;">Administrator</div>
<div class="t" style="left:655.80px;top:363.64px;">13</div>
<div class="hl" style="left:1px;top:398px;width:664px;background:#ababab"></div>
<svg style="left:18px;top:382px" width="17" height="15" viewBox="0 0 17 15"><use href="#flock"/></svg>
<svg style="left:65px;top:382px" width="17" height="15" viewBox="0 0 17 15"><use href="#fpen"/></svg>
<svg style="left:97px;top:381px" width="16" height="16"><use href="#gear" width="16" height="16"/></svg>
<div class="t" style="left:113.00px;top:382.64px;letter-spacing:-0.625px;">SN-023384</div>
<div class="t" style="left:211.20px;top:382.64px;letter-spacing:-0.076px;">LT Winkel, symmetrisch</div>
<svg style="left:416px;top:381px" width="16" height="16" viewBox="0 0 16 16"><use href="#wf"/></svg>
<div class="t" style="left:476.20px;top:382.64px;letter-spacing:-0.556px;">11.01.2010</div>
<div class="t" style="left:570.80px;top:382.64px;letter-spacing:0.250px;">Administrator</div>
<div class="t" style="left:655.80px;top:382.64px;">13</div>
<div class="vl" style="left:50px;top:0;height:392px;background:#ababab"></div>
<div class="vl" style="left:95px;top:0;height:392px;background:#ababab"></div>
<div class="vl" style="left:210px;top:0;height:392px;background:#ababab"></div>
<div class="vl" style="left:340px;top:0;height:392px;background:#ababab"></div>
<div class="vl" style="left:372px;top:0;height:392px;background:#ababab"></div>
<div class="vl" style="left:474px;top:0;height:392px;background:#ababab"></div>
<div class="vl" style="left:569px;top:0;height:392px;background:#ababab"></div>
<div class="vl" style="left:654px;top:0;height:392px;background:#ababab"></div>
</div>
<div class="a" style="left:665px;top:234px;width:17px;height:392px;background:#f4f4f4"></div>
<svg style="left:669px;top:239px" width="8" height="5" viewBox="0 0 8 5"><path d="M0,5 L4,0 L8,5Z" fill="#c0c0c0"/></svg>
<div class="a" style="left:670px;top:250px;width:6px;height:55px;background:#a8a8a8;border-radius:3px"></div>
<svg style="left:669px;top:616px" width="8" height="5" viewBox="0 0 8 5"><path d="M0,0 L4,5 L8,0Z" fill="#c0c0c0"/></svg>
<div class="a" style="left:0;top:626px;width:665px;height:16px;background:#f4f4f4"></div>
<div class="a" style="left:665px;top:626px;width:17px;height:16px;background:#fff"></div>
<svg style="left:7px;top:630px" width="5" height="8" viewBox="0 0 5 8"><path d="M5,0 L0,4 L5,8Z" fill="#c0c0c0"/></svg>
<div class="a" style="left:17px;top:631px;width:361px;height:6px;background:#a8a8a8;border-radius:3px"></div>
<svg style="left:654px;top:630px" width="5" height="8" viewBox="0 0 5 8"><path d="M0,0 L5,4 L0,8Z" fill="#c0c0c0"/></svg>
<div class="vl" style="left:0;top:175px;height:467px;background:#dcdcdc"></div>
<div class="a" style="left:0;top:642px;width:682px;height:24px;background:#ededed;border-bottom:1px solid #dcdcdc"></div>
<div class="t" id="t_stat" style="left:4.00px;top:647.44px;letter-spacing:-0.080px;">Number of records:132</div></body></html>
